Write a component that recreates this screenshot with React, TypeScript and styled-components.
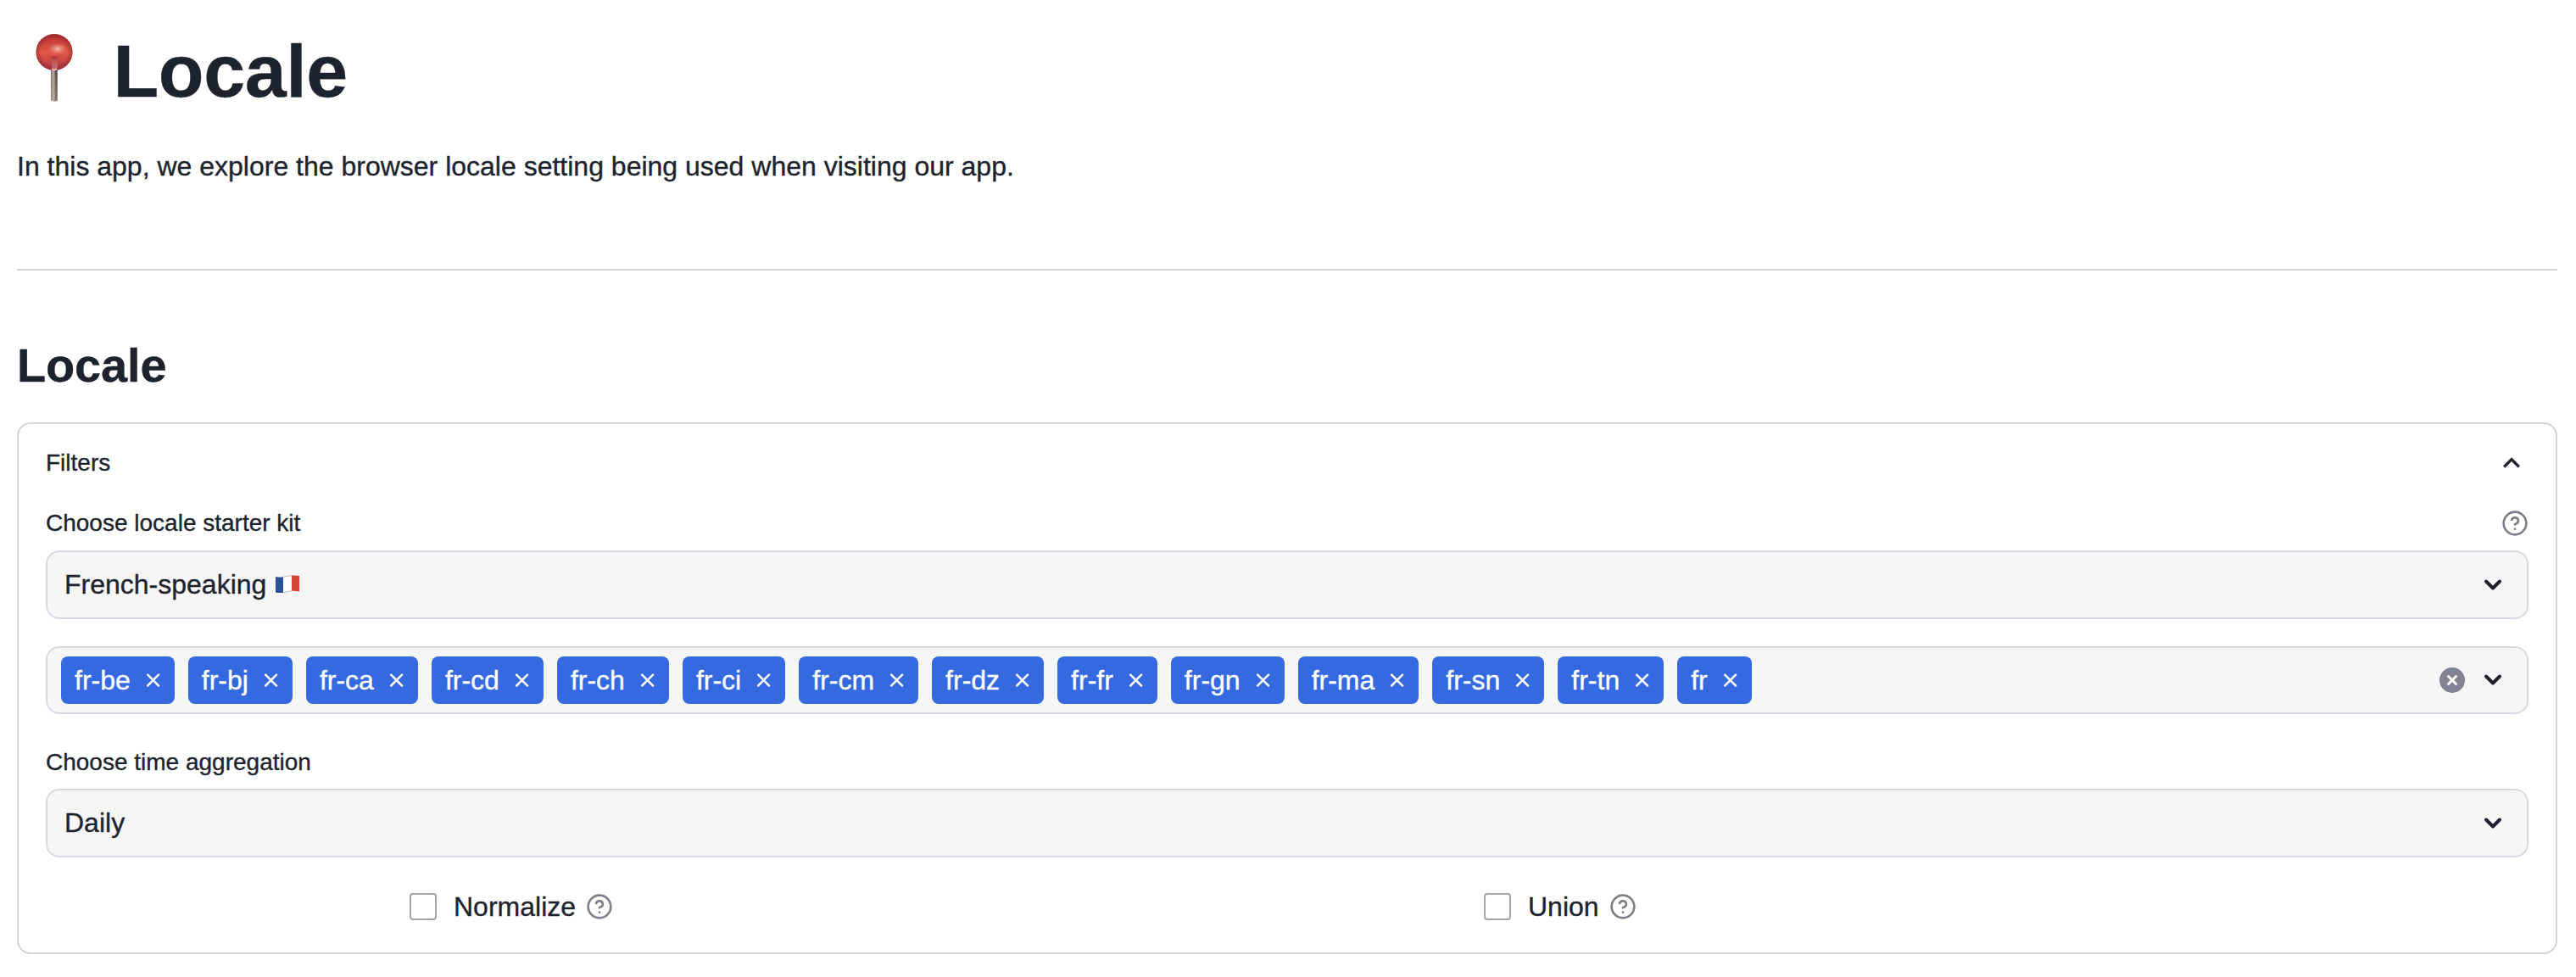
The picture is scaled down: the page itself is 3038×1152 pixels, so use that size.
import React from "react";
import styled, { createGlobalStyle } from "styled-components";

const INK = "#1d232d";
const LINE = "#d3d3d3";

const GlobalStyle = createGlobalStyle`
  *, *::before, *::after { box-sizing: border-box; }
  body {
    margin: 0;
    background: #fff;
    color: ${INK};
    font-family: "Liberation Sans", Helvetica, Arial, sans-serif;
    font-size: 32px;
    -webkit-text-stroke: 0.35px currentColor;
  }
  svg { display: block; flex: none; }
`;

const Page = styled.main`
  display: flex;
  flex-direction: column;
  min-height: 1152px;
  padding: 31px 22px 27px 20px;
`;

const Title = styled.h1`
  display: flex;
  align-items: center;
  margin: 0;
  height: 106px;
  font-size: 88px;
  line-height: 106px;
  font-weight: 700;
  letter-spacing: -0.005em;
`;

const PinSlot = styled.span`
  display: flex;
  width: 113.5px;
  height: 106px;
  padding: 9px 0 0 22px;
`;

const Intro = styled.p`
  margin: 33px 0 0;
  line-height: 52px;
`;

const Divider = styled.hr`
  width: 100%;
  height: 2px;
  margin: 95px 0 78px;
  border: 0;
  background: ${LINE};
`;

const SectionTitle = styled.h2`
  margin: 0;
  font-size: 56px;
  line-height: 68px;
  font-weight: 700;
  letter-spacing: -0.003em;
`;

const Panel = styled.section`
  height: 627px;
  margin-top: 33px;
  padding: 25px 32px 0;
  border: 2px solid ${LINE};
  border-radius: 16px;
`;

const LabelRow = styled.div<{ $top?: number; $bottom?: number }>`
  display: flex;
  justify-content: space-between;
  align-items: center;
  height: 42px;
  margin-top: ${(p) => p.$top ?? 0}px;
  margin-bottom: ${(p) => p.$bottom ?? 0}px;
  font-size: 28px;
  line-height: 42px;
`;

const Field = styled.div<{ $height: number; $inset: number; $top?: number }>`
  display: flex;
  align-items: center;
  gap: 16px;
  height: ${(p) => p.$height}px;
  margin-top: ${(p) => p.$top ?? 0}px;
  padding: 0 24px 0 ${(p) => p.$inset}px;
  border: 2px solid #d6dae5;
  border-radius: 16px;
  background: #f6f6f6;
`;

const Value = styled.span`
  display: flex;
  align-items: center;
  gap: 11px;
  line-height: 44px;
  padding-bottom: 2px;
`;

const Controls = styled.div`
  display: flex;
  align-items: center;
  gap: 17px;
  margin-left: auto;
`;

const Tag = styled.span`
  display: flex;
  align-items: center;
  height: 56px;
  padding: 0 17px 0 16px;
  gap: 19px;
  border-radius: 8px;
  background: #3569df;
  color: #fff;
  line-height: 56px;
`;

const Options = styled.div`
  display: grid;
  grid-template-columns: 1267px 1fr;
  margin-top: 42px;
  padding-left: 429px;
`;

const Option = styled.label`
  display: flex;
  align-items: center;
  height: 32px;
  line-height: 32px;
`;

const Box = styled.span`
  width: 32px;
  height: 32px;
  margin-right: 20px;
  border: 2px solid #a4a4aa;
  border-radius: 4px;
  background: #fff;
`;

const OptionText = styled.span`
  margin-right: 12px;
`;

const Pin = () => (
  <svg width="44" height="82" viewBox="0 0 44 82">
    <defs>
      <linearGradient id="needle" x1="0" x2="1" y1="0" y2="0">
        <stop offset="0" stopColor="#5f5850" />
        <stop offset=".3" stopColor="#b5aaa0" />
        <stop offset=".55" stopColor="#8b8078" />
        <stop offset=".8" stopColor="#3f3a38" />
        <stop offset="1" stopColor="#9a8f86" />
      </linearGradient>
      <linearGradient id="needleFade" x1="0" x2="0" y1="0" y2="1">
        <stop offset="0" stopColor="#c9b8a8" stopOpacity="0" />
        <stop offset="1" stopColor="#c9b8a8" stopOpacity=".4" />
      </linearGradient>
      <linearGradient id="ball" x1="0" x2="0" y1="0" y2="1">
        <stop offset="0" stopColor="#b03534" />
        <stop offset=".2" stopColor="#c83e39" />
        <stop offset=".5" stopColor="#e05c4a" />
        <stop offset=".68" stopColor="#d04a41" />
        <stop offset="1" stopColor="#a8364f" />
      </linearGradient>
      <radialGradient id="rim" cx=".5" cy=".5" r=".5">
        <stop offset=".7" stopColor="#8e2430" stopOpacity="0" />
        <stop offset="1" stopColor="#8e2430" stopOpacity=".6" />
      </radialGradient>
      <radialGradient id="shine" cx=".5" cy=".5" r=".5">
        <stop offset="0" stopColor="#f8c3b6" stopOpacity=".95" />
        <stop offset="1" stopColor="#ee8a78" stopOpacity="0" />
      </radialGradient>
      <linearGradient id="stub" x1="0" x2="0" y1="0" y2="1">
        <stop offset="0" stopColor="#a93236" />
        <stop offset="1" stopColor="#d98a86" />
      </linearGradient>
    </defs>
    <path d="M18 40h8v38.500q-4 2.200-8 0z" fill="url(#needle)" />
    <path d="M18 40h8v38.500q-4 2.200-8 0z" fill="url(#needleFade)" />
    <circle cx="22" cy="21.500" r="21.500" fill="url(#ball)" />
    <circle cx="22" cy="21.500" r="21.500" fill="url(#rim)" />
    <ellipse cx="26" cy="17.500" rx="11" ry="7" fill="url(#shine)" />
    <path d="M18.500 27q3.500-2 8 0l-1 14q-3.500 1.500-6 0z" fill="url(#stub)" opacity=".75" />
    <path d="M19 41.500q3 1.500 6 0" fill="none" stroke="#efc3bb" strokeWidth="1.500" />
  </svg>
);

const Flag = () => (
  <svg width="28" height="22" viewBox="0 0 28 22">
    <path d="M0 2q4.500 1 9 .3v18.400Q4.500 21.500 0 20.500z" fill="#2a5298" />
    <path d="M9 2.300Q14 1.300 19 .6v18.200q-5 .9-10 1.900z" fill="#fff" />
    <path d="M9 2.300Q14 1.300 19 .6M9 20.700q5-1 10-1.900" fill="none" stroke="#b9bcc4" strokeWidth="1" />
    <path d="M19 .6q4.500-.6 9 .4v18.600q-4.500-1-9-.8z" fill="#d5493b" />
  </svg>
);

const Help = () => (
  <svg
    width="32"
    height="32"
    viewBox="0 0 24 24"
    fill="none"
    stroke="#7d8088"
    strokeWidth="2"
    strokeLinecap="round"
    strokeLinejoin="round"
  >
    <circle cx="12" cy="12" r="10" />
    <path d="M9.090 9a3 3 0 0 1 5.830 1c0 2-3 3-3 3M12 17h.01" />
  </svg>
);

const Collapse = () => (
  <svg width="40" height="40" viewBox="0 0 24 24" fill={INK}>
    <path d="M12 8l-6 6 1.410 1.410L12 10.830l4.590 4.580L18 14z" />
  </svg>
);

const Caret = () => (
  <svg width="32" height="32" viewBox="0 0 32 32" fill="none">
    <path
      d="M8 11.500l8 8 8-8"
      stroke={INK}
      strokeWidth="4"
      strokeLinecap="round"
      strokeLinejoin="round"
    />
  </svg>
);

const Clear = () => (
  <svg width="30" height="30" viewBox="0 0 30 30">
    <circle cx="15" cy="15" r="15" fill="#808495" />
    <path d="M10.500 10.500l9 9M19.500 10.500l-9 9" stroke="#fff" strokeWidth="3" strokeLinecap="round" />
  </svg>
);

const Remove = () => (
  <svg width="16" height="16" viewBox="0 0 16 16">
    <path d="M1.200 1.700l12.800 12.800M14 1.700L1.200 14.500" stroke="#fff" strokeWidth="2.500" strokeLinecap="round" />
  </svg>
);

const locales = [
  "fr-be", "fr-bj", "fr-ca", "fr-cd", "fr-ch", "fr-ci", "fr-cm",
  "fr-dz", "fr-fr", "fr-gn", "fr-ma", "fr-sn", "fr-tn", "fr",
];

export default function App() {
  return (
    <>
      <GlobalStyle />
      <Page>
        <Title>
          <PinSlot>
            <Pin />
          </PinSlot>
          Locale
        </Title>
        <Intro>In this app, we explore the browser locale setting being used when visiting our app.</Intro>
        <Divider />
        <SectionTitle>Locale</SectionTitle>
        <Panel>
          <LabelRow>
            Filters
            <Collapse />
          </LabelRow>
          <LabelRow $top={29} $bottom={11}>
            Choose locale starter kit
            <Help />
          </LabelRow>
          <Field $height={81} $inset={20}>
            <Value>
              French-speaking
              <Flag />
            </Value>
            <Controls>
              <Caret />
            </Controls>
          </Field>
          <Field $height={80} $inset={16} $top={32}>
            {locales.map((code) => (
              <Tag key={code}>
                {code}
                <Remove />
              </Tag>
            ))}
            <Controls>
              <Clear />
              <Caret />
            </Controls>
          </Field>
          <LabelRow $top={36} $bottom={10}>
            Choose time aggregation
          </LabelRow>
          <Field $height={81} $inset={20}>
            <Value>Daily</Value>
            <Controls>
              <Caret />
            </Controls>
          </Field>
          <Options>
            {["Normalize", "Union"].map((name) => (
              <Option key={name}>
                <Box />
                <OptionText>{name}</OptionText>
                <Help />
              </Option>
            ))}
          </Options>
        </Panel>
      </Page>
    </>
  );
}
